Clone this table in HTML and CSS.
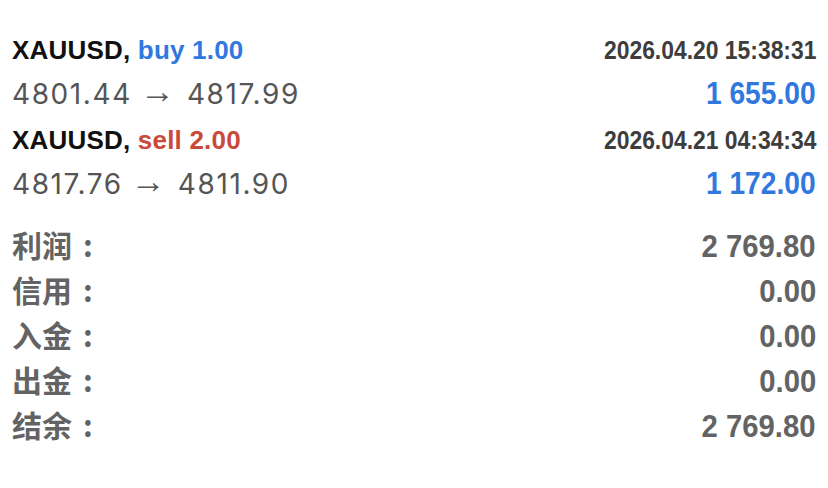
FILE: index.html
```html
<!DOCTYPE html>
<html lang="zh">
<head>
<meta charset="utf-8">
<link rel="stylesheet" href="styles.css">
</head>
<body>
<div class="page">
  <div class="deals">
    <div class="row head">
      <span class="sym">XAUUSD, <span class="buy">buy 1.00</span></span>
      <span class="date">2026.04.20 15:38:31</span>
    </div>
    <div class="row prices">
      <span class="price">4801.44<span class="arrow">→</span>4817.99</span>
      <span class="profit">1 655.00</span>
    </div>
    <div class="row head">
      <span class="sym">XAUUSD, <span class="sell">sell 2.00</span></span>
      <span class="date">2026.04.21 04:34:34</span>
    </div>
    <div class="row prices">
      <span class="price">4817.76<span class="arrow">→</span>4811.90</span>
      <span class="profit">1 172.00</span>
    </div>
  </div>
  <div class="summary">
    <div class="row sum"><span class="label">利润<span class="colon">:</span></span><span class="val">2 769.80</span></div>
    <div class="row sum"><span class="label">信用<span class="colon">:</span></span><span class="val">0.00</span></div>
    <div class="row sum"><span class="label">入金<span class="colon">:</span></span><span class="val">0.00</span></div>
    <div class="row sum"><span class="label">出金<span class="colon">:</span></span><span class="val">0.00</span></div>
    <div class="row sum"><span class="label">结余<span class="colon">:</span></span><span class="val">2 769.80</span></div>
  </div>
</div>
</body>
</html>
```

FILE: styles.css
```css
html, body {
  margin: 0;
  padding: 0;
  background: #ffffff;
}
.page {
  width: 828px;
  height: 488px;
  box-sizing: border-box;
  padding: 28px 12px 0 12px;
  font-family: "Liberation Sans", Arial, sans-serif;
}
.row {
  display: flex;
  justify-content: space-between;
  align-items: baseline;
  height: 45px;
}
.head {
  line-height: 45px;
}
.sym {
  font-weight: 700;
  font-size: 26px;
  letter-spacing: 0.2px;
  color: #111111;
}
.buy { color: #3178de; }
.sell { color: #c84a3b; }
.date {
  display: inline-block;
  font-weight: 700;
  font-size: 26px;
  color: #3d3d3d;
  transform: scaleX(0.88);
  transform-origin: right center;
}
.price {
  font-family: Inter, "Liberation Sans", sans-serif;
  font-size: 28px;
  line-height: 42px;
  letter-spacing: 1.6px;
  color: #555555;
}
.arrow {
  font-family: "Liberation Sans", sans-serif;
  font-size: 35px;
  line-height: 30px;
  letter-spacing: 0;
  margin: 0 12px 0 8px;
  vertical-align: 1px;
}
.profit {
  display: inline-block;
  font-weight: 700;
  font-size: 32px;
  line-height: 40px;
  color: #3178de;
  transform: scaleX(0.88);
  transform-origin: right center;
}
.summary {
  margin-top: 16px;
}
.label {
  font-family: "Noto Sans CJK SC", sans-serif;
  font-weight: 700;
  font-size: 30px;
  line-height: 40px;
  color: #636363;
}
.colon {
  margin-left: 11px;
}
.val {
  display: inline-block;
  font-weight: 700;
  font-size: 32px;
  line-height: 45px;
  color: #636363;
  transform: scaleX(0.915);
  transform-origin: right center;
}
```
